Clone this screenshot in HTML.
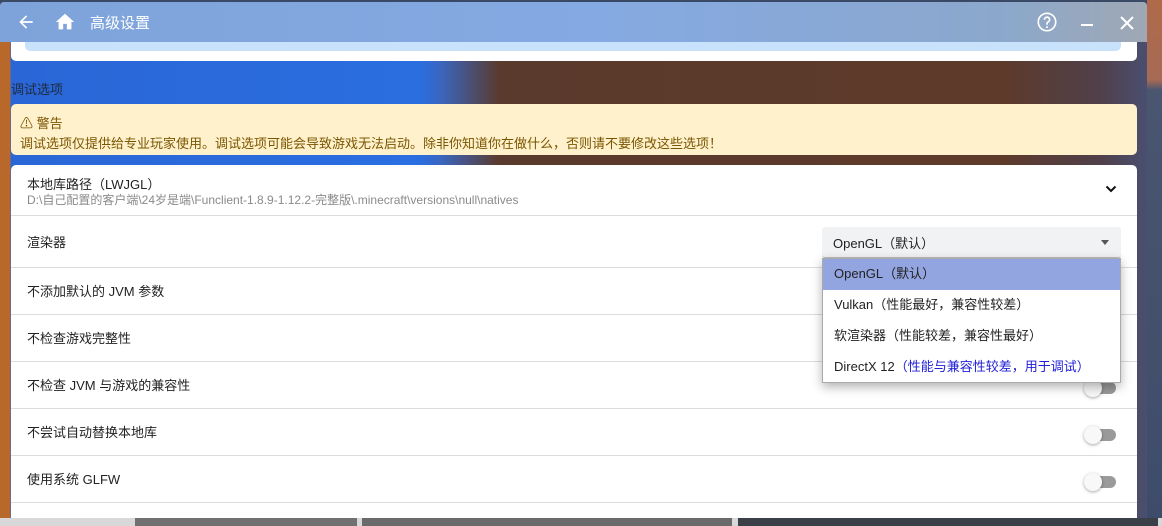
<!DOCTYPE html>
<html><head><meta charset="utf-8"><style>
*{margin:0;padding:0;box-sizing:border-box}
body{width:1162px;height:526px;overflow:hidden;position:relative;font-family:"Liberation Sans","Noto Sans CJK SC",sans-serif;background:#3a4a66}
.desk{position:absolute;left:1147px;top:0;width:15px;height:526px;background:linear-gradient(#b06a4a 0,#a66a55 80px,#4a5670 90px,#3d4c6a 526px)}
.bot{position:absolute;left:0;top:518px;width:1162px;height:8px;background:#d8d8d8}
.bot div{position:absolute;top:0;height:8px;background:#6a6a6a}
.win{position:absolute;left:0;top:2px;width:1147px;height:516px;overflow:hidden;border-radius:4px 4px 0 0;
background:linear-gradient(90deg,#b8682a 0,#b8682a 10px,#2a66d6 11px,#2a6ee0 420px,#3a66c0 440px,#5a3a2c 500px,#5e3a2a 1000px,#50404a 1100px,#4a4f70 1147px)}
.tb{position:absolute;left:0;top:0;width:1147px;height:40px;background:linear-gradient(90deg,#7ea3da,#85a9e2 600px,#8ba8cc 1000px,#9fa8b4);z-index:5}
.tb .t{position:absolute;left:90px;top:10px;color:#fff;font-size:15px}
.card{position:absolute;left:11px;width:1126px;background:#fff;border-radius:5px}
.row{position:absolute;left:0;width:1126px;border-top:1px solid #dcdcdc;font-size:13px;color:#222}
.row span{position:absolute;left:16px}
.tg{position:absolute;left:1075px;width:30px;height:12px;border-radius:6px;background:#9a9a9a}
.tg:before{content:"";position:absolute;left:-2px;top:-3px;width:18px;height:18px;border-radius:50%;background:#f8f8f8;box-shadow:0 1px 3px rgba(0,0,0,.35)}
.menu{position:absolute;left:822px;top:258px;width:299px;height:125px;background:#fff;border:1px solid #aaa;box-shadow:0 4px 10px rgba(0,0,0,.3);z-index:6;font-size:13px;color:#222}
.menu div{height:31px;line-height:30px;padding-left:11px}
</style></head><body>
<div class="desk"></div>
<div class="bot"><div style="left:135px;width:222px;background:#707070"></div><div style="left:362px;width:370px;background:#6a6a6a"></div><div style="left:738px;width:420px;background:#3a3f48"></div></div>
<div class="win">
 <div class="tb">
  <svg style="position:absolute;left:16px;top:10px" width="20" height="20" viewBox="0 0 24 24"><path d="M20 11H7.8l5.6-5.6L12 4l-8 8 8 8 1.4-1.4L7.8 13H20z" fill="#fff"/></svg>
  <svg style="position:absolute;left:54px;top:9px" width="22" height="22" viewBox="0 0 24 24"><path d="M10 20v-6h4v6h5v-8h3L12 3 2 12h3v8z" fill="#fff"/></svg>
  <div class="t">高级设置</div>
  <svg style="position:absolute;left:1036px;top:9px" width="22" height="22" viewBox="0 0 24 24"><circle cx="12" cy="12" r="9.5" fill="none" stroke="#fff" stroke-width="1.8"/><path d="M9.2 9.5a2.8 2.8 0 1 1 4 2.5c-.8.4-1.2 1-1.2 1.8V15" fill="none" stroke="#fff" stroke-width="1.8"/><circle cx="12" cy="17.6" r="1.1" fill="#fff"/></svg>
  <div style="position:absolute;left:1081px;top:22px;width:12px;height:2px;background:#fff"></div>
  <svg style="position:absolute;left:1119px;top:13px" width="16" height="16" viewBox="0 0 16 16"><path d="M2 2l12 12M14 2L2 14" stroke="#fff" stroke-width="2"/></svg>
 </div>
 <div class="card" style="top:0;height:59px"><div style="position:absolute;left:14px;top:20px;width:1096px;height:29px;background:#c9e2fb;border-radius:0 0 5px 5px"></div></div>
 <div style="position:absolute;left:11px;top:77px;font-size:13px;color:#1e2a40">调试选项</div>
 <div class="card" style="top:102px;height:51px;background:#fff1cc;color:#7a5500;font-size:13px">
  <div style="position:absolute;left:9px;top:9px">⚠ 警告</div>
  <div style="position:absolute;left:9px;top:29px">调试选项仅提供给专业玩家使用。调试选项可能会导致游戏无法启动。除非你知道你在做什么，否则请不要修改这些选项！</div>
 </div>
 <div class="card" style="top:163px;height:360px;border-radius:5px 5px 0 0">
  <div style="position:absolute;left:16px;top:9px;font-size:13px;color:#222">本地库路径（LWJGL）</div>
  <div style="position:absolute;left:16px;top:26px;font-size:12px;color:#8a8a8a">D:\自己配置的客户端\24岁是端\Funclient-1.8.9-1.12.2-完整版\.minecraft\versions\null\natives</div>
  <svg style="position:absolute;left:1094px;top:20px" width="12" height="8" viewBox="0 0 12 8"><path d="M1.5 1.5l4.5 4.5 4.5-4.5" fill="none" stroke="#111" stroke-width="2"/></svg>
  <div class="row" style="top:50px;height:52px"><span style="top:16px">渲染器</span>
   <div style="position:absolute;left:811px;top:11px;width:299px;height:31px;background:#f1f2f4;border-radius:3px;border-bottom:1px solid #bbb;font-size:13px"><span style="left:11px;top:6px">OpenGL（默认）</span><div style="position:absolute;left:279px;top:13px;border-left:4px solid transparent;border-right:4px solid transparent;border-top:5px solid #555"></div></div>
  </div>
  <div class="row" style="top:102px;height:47px"><span style="top:13px">不添加默认的 JVM 参数</span></div>
  <div class="row" style="top:149px;height:47px"><span style="top:13px">不检查游戏完整性</span></div>
  <div class="row" style="top:196px;height:47px"><span style="top:13px">不检查 JVM 与游戏的兼容性</span><div class="tg" style="top:20px"></div></div>
  <div class="row" style="top:243px;height:47px"><span style="top:13px">不尝试自动替换本地库</span><div class="tg" style="top:20px"></div></div>
  <div class="row" style="top:290px;height:47px"><span style="top:13px">使用系统 GLFW</span><div class="tg" style="top:20px"></div></div>
  <div class="row" style="top:337px;height:30px"></div>
 </div>
</div>
<div class="menu">
 <div style="background:#93a5e0">OpenGL（默认）</div>
 <div>Vulkan（性能最好，兼容性较差）</div>
 <div>软渲染器（性能较差，兼容性最好）</div>
 <div>DirectX 12<span style="color:#2020d8">（性能与兼容性较差，用于调试）</span></div>
</div>
</body></html>
